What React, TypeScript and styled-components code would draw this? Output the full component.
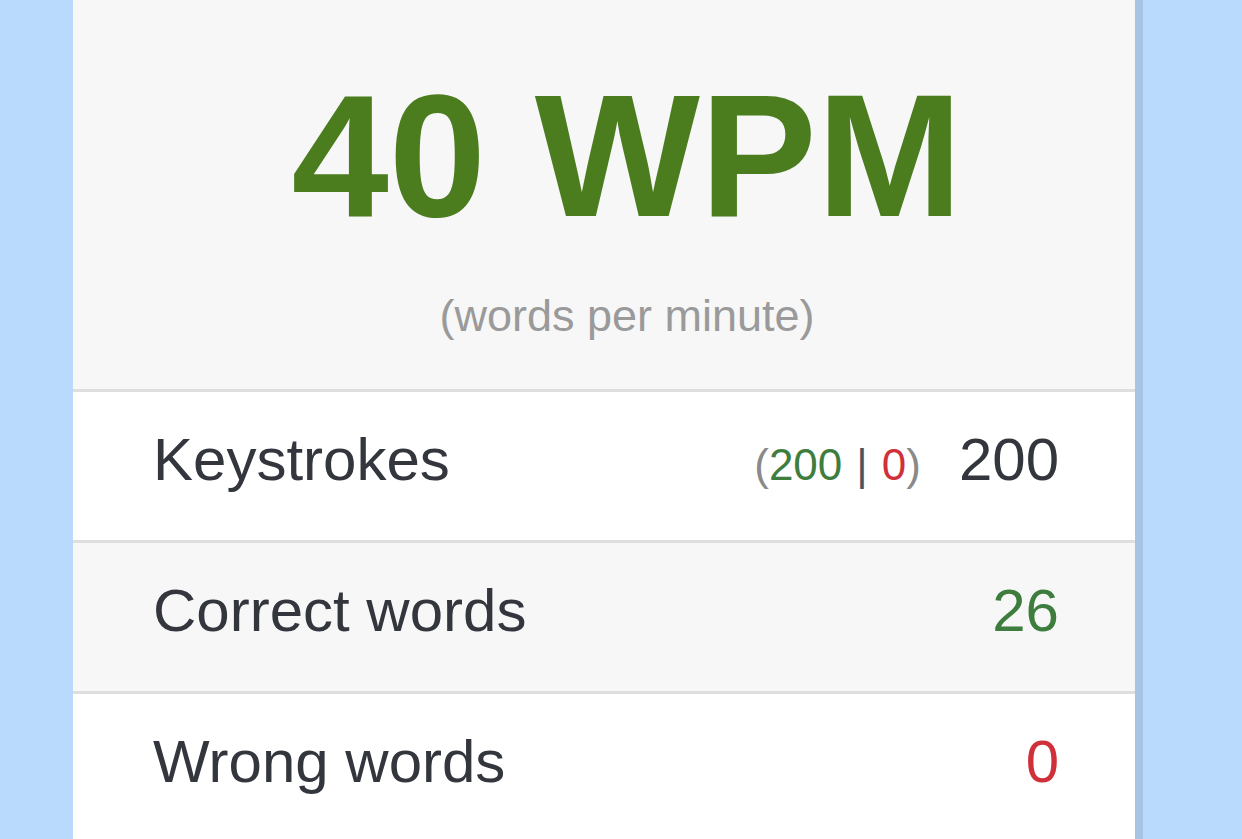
import styled, { createGlobalStyle } from "styled-components";

const GlobalStyle = createGlobalStyle`
  html, body {
    margin: 0;
    padding: 0;
    background: #badafd;
    font-family: "Liberation Sans", Arial, sans-serif;
  }
  * {
    box-sizing: border-box;
  }
`;

const Page = styled.div`
  display: flex;
  height: 839px;
  padding-left: 73px;
  overflow: hidden;
`;

const Card = styled.div`
  width: 1070px;
  display: flex;
  flex-direction: column;
  background: #ffffff;
  border-right: 8px solid #a8c4e4;
`;

const Header = styled.div`
  height: 392px;
  flex-shrink: 0;
  padding-left: 46px;
  background: #f7f7f7;
  border-bottom: 3px solid #dedede;
  display: flex;
  flex-direction: column;
  align-items: center;
`;

const Speed = styled.div`
  margin-top: 66px;
  font-size: 175px;
  line-height: 180px;
  font-weight: bold;
  color: #4b7d1f;
`;

const Unit = styled.div`
  margin-top: 44px;
  font-size: 45px;
  line-height: 52px;
  color: #9a9a9a;
`;

const Row = styled.div<{ $shade?: boolean }>`
  height: 151px;
  flex-shrink: 0;
  display: flex;
  align-items: center;
  justify-content: space-between;
  padding: 0 76px 14px 80px;
  background: ${(p) => (p.$shade ? "#f7f7f7" : "#ffffff")};
  border-bottom: 3px solid #dedede;
  font-size: 60px;
  color: #33373d;
`;

const Label = styled.span``;

const Value = styled.span<{ $tone?: "green" | "red" }>`
  display: flex;
  align-items: baseline;
  gap: 38px;
  color: ${(p) =>
    p.$tone === "green" ? "#3e7d3e" : p.$tone === "red" ? "#d0303a" : "#33373d"};
`;

const Detail = styled.span`
  font-size: 44px;
  color: #8a8a8a;
`;

const Ok = styled.span`
  color: #3e7d3e;
`;

const Bad = styled.span`
  color: #d0303a;
`;

const Bar = styled.span`
  color: #4a5560;
  margin: 0 14px;
`;

export default function App() {
  return (
    <>
      <GlobalStyle />
      <Page>
        <Card>
          <Header>
            <Speed>40 WPM</Speed>
            <Unit>(words per minute)</Unit>
          </Header>
          <Row>
            <Label>Keystrokes</Label>
            <Value>
              <Detail>
                (<Ok>200</Ok>
                <Bar>|</Bar>
                <Bad>0</Bad>)
              </Detail>
              200
            </Value>
          </Row>
          <Row $shade>
            <Label>Correct words</Label>
            <Value $tone="green">26</Value>
          </Row>
          <Row>
            <Label>Wrong words</Label>
            <Value $tone="red">0</Value>
          </Row>
        </Card>
      </Page>
    </>
  );
}
